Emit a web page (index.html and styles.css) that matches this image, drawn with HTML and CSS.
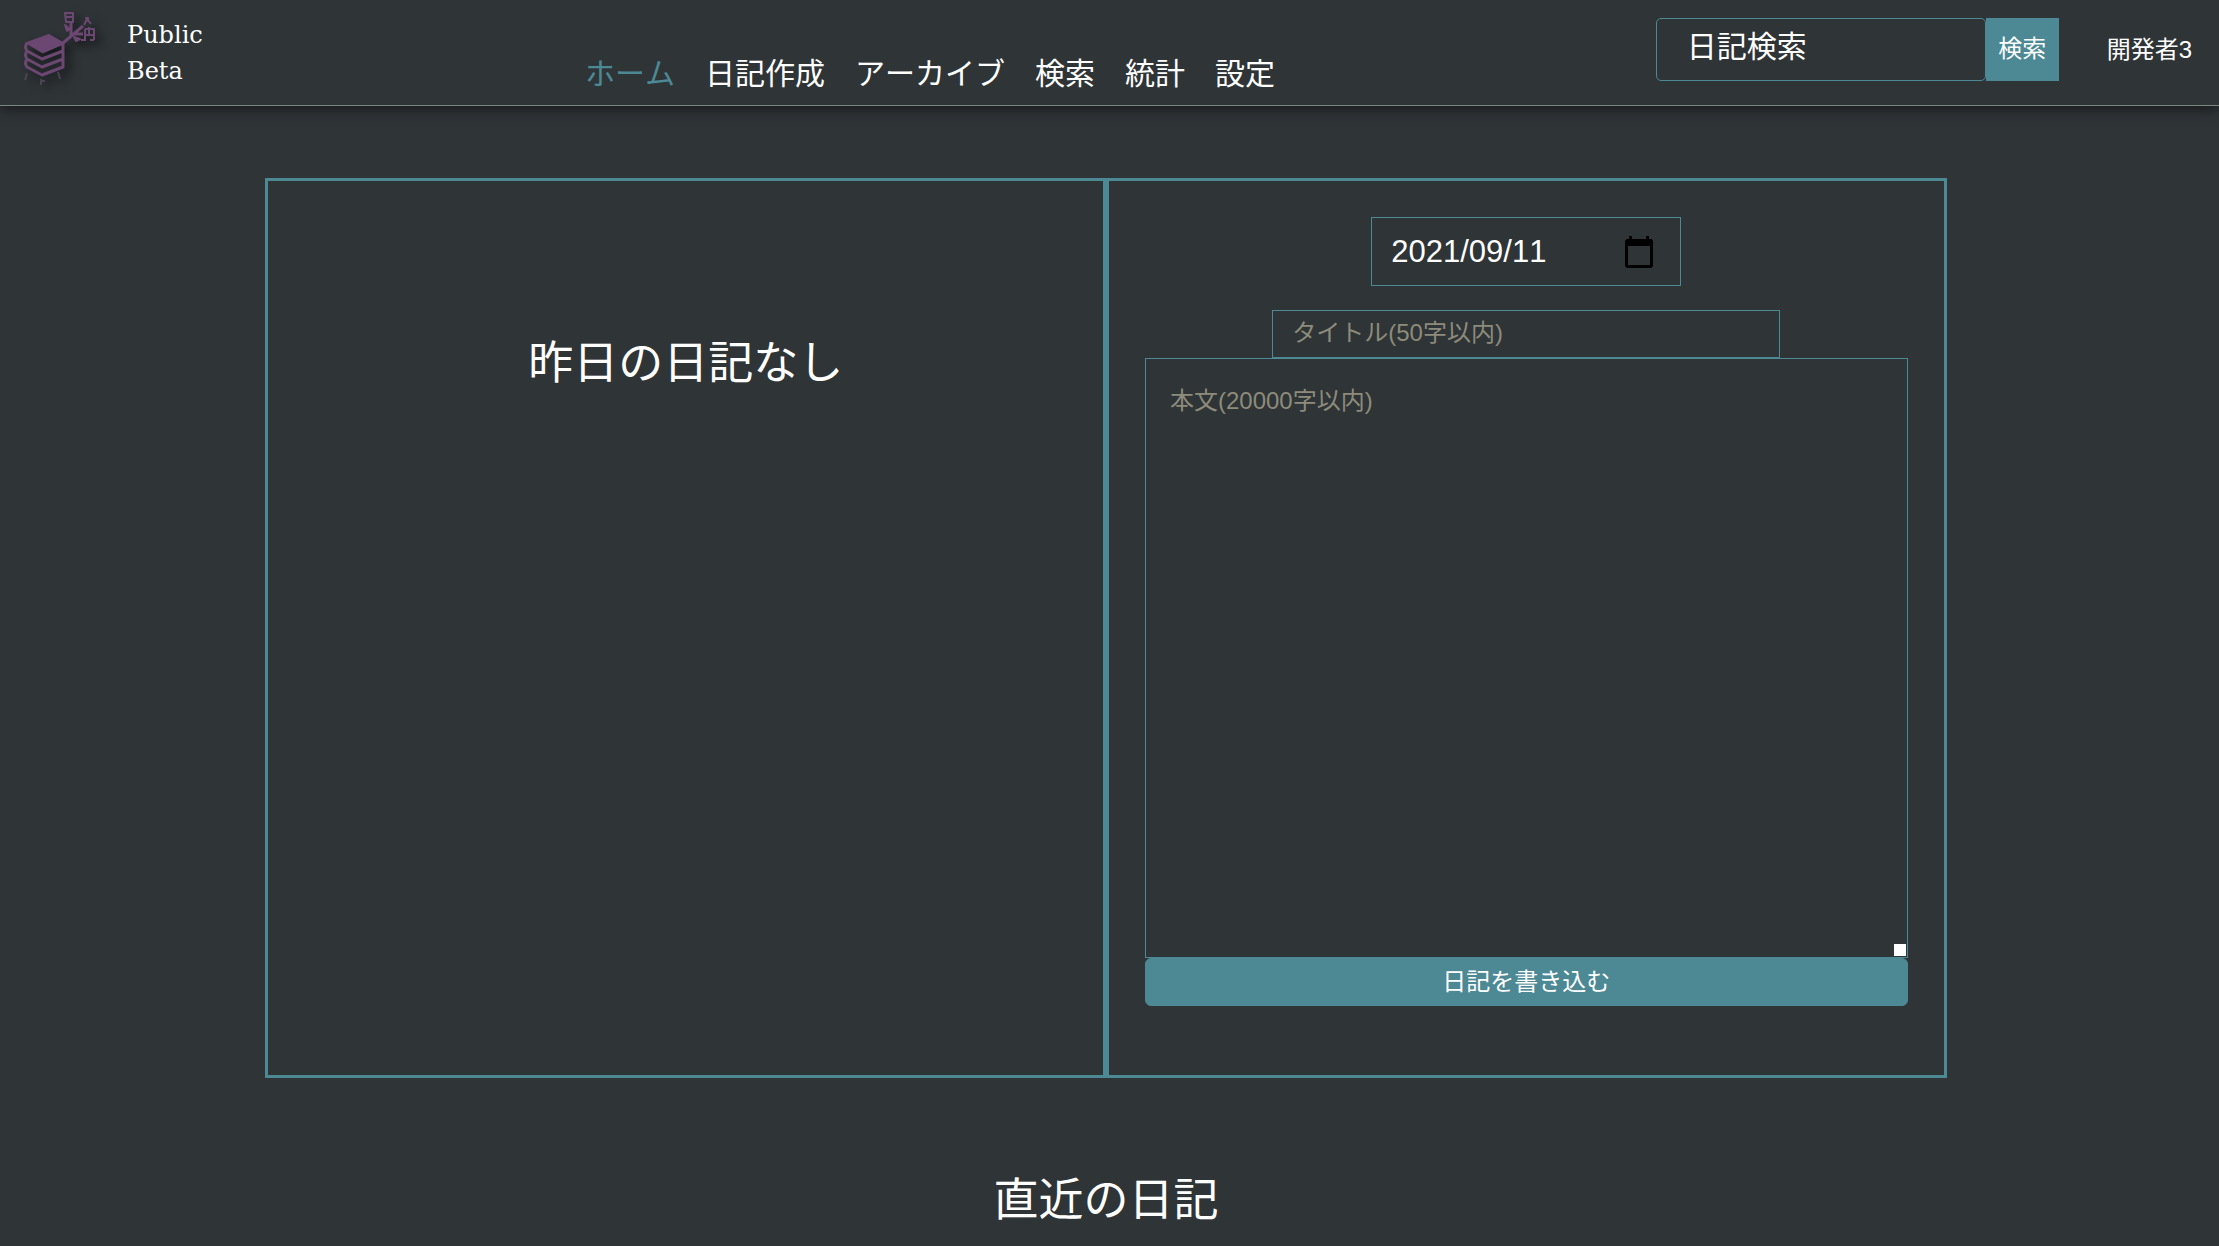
FILE: index.html
```html
<!DOCTYPE html>
<html lang="ja">
<head>
<meta charset="utf-8">
<meta name="viewport" content="width=device-width, initial-scale=1">
<title>ホーム</title>
<link rel="stylesheet" href="styles.css">
</head>
<body>
<header class="header">
  <a class="brand" href="#">
    <svg class="logo" viewBox="0 0 90 90" aria-hidden="true">
      <g fill="#6b4772" stroke="#6b4772" stroke-width="2" stroke-linejoin="round">
        <path d="M12 38 34 30 48 38 27 47Z"/>
        <path fill="none" stroke-width="3" d="M12 38Q9 42 12 46L27 54 48 46V38M27 47 48 38M12 46Q9 50 12 54L27 62 48 54V46M12 54Q9 58 12 62L27 70 48 62V54"/>
        <path fill="none" stroke-width="3" d="M48 38 68 21M56 31V18M58 29H68"/>
        <path fill="none" d="M50 8H58V17H51ZM51 12H58M69 20 72 14 76 19M70 24H79V35M70 24V35M74 22V30M70 30H79M66 35H71M75 35H79"/>
        <path d="M50 20 55 24 52 26ZM59 32 65 34 61 36ZM71 13 73 13 73 16Z"/>
      </g>
      <path fill="none" stroke="#4a4350" stroke-width="2" d="M12 68 10 75M26 74V80M26 76H30M43 67 45 74"/>
    </svg>
    <span class="brand-name">Public<br>Beta</span>
  </a>
  <nav class="nav">
    <a class="nav-link current" href="#">ホーム</a>
    <a class="nav-link" href="#">日記作成</a>
    <a class="nav-link" href="#">アーカイブ</a>
    <a class="nav-link" href="#">検索</a>
    <a class="nav-link" href="#">統計</a>
    <a class="nav-link" href="#">設定</a>
  </nav>
  <form class="search">
    <input class="search-input" type="text" placeholder="日記検索" aria-label="日記検索">
    <button class="search-button" type="button">検索</button>
  </form>
  <a class="user" href="#">開発者3</a>
</header>
<main class="main">
  <div class="panels">
    <section class="panel">
      <h2 class="heading">昨日の日記なし</h2>
    </section>
    <form class="panel editor">
      <div class="date-field">
        <input class="date-input" type="text" value="2021/09/11" aria-label="日付">
        <button class="date-button" type="button" aria-label="カレンダー">
          <svg viewBox="0 0 30 34" aria-hidden="true"><path fill-rule="evenodd" d="M5 1H8V4H22V1H25V4H27Q29 4 29 7V30Q29 33 26 33H4Q1 33 1 30V7Q1 4 4 4H5ZM4 11V30H26V11Z"/></svg>
        </button>
      </div>
      <input class="title-input" type="text" placeholder="タイトル(50字以内)" aria-label="タイトル">
      <textarea class="body-input" placeholder="本文(20000字以内)" aria-label="本文"></textarea>
      <button class="submit" type="button">日記を書き込む</button>
    </form>
  </div>
  <h2 class="heading">直近の日記</h2>
</main>
</body>
</html>
```
FILE: styles.css
```css
* { box-sizing: border-box; }

body {
  margin: 0;
  background: #2f3437;
  color: #fff;
  font-family: "Liberation Sans", "Noto Sans CJK JP", sans-serif;
  font-size: 24px;
  font-kerning: none;
}

a { color: inherit; text-decoration: none; }

input, textarea, button {
  margin: 0;
  font: inherit;
  font-kerning: none;
  color: inherit;
  background: none;
  border: 1px solid #4c8995;
  border-radius: 0;
}

.header {
  display: flex;
  align-items: flex-start;
  height: 106px;
  padding-right: 27px;
  background: #2f3437;
  border-bottom: 1px solid #7d8582;
  box-shadow: 0 3px 12px #15191a;
}

.brand {
  display: flex;
  flex: 0 0 585px;
  gap: 22px;
  padding: 5px 0 0 15px;
}

.logo {
  width: 90px;
  height: 90px;
  filter: drop-shadow(6px 6px 5px #15181a);
}

.brand-name {
  padding-top: 12px;
  font-family: "DejaVu Serif", serif;
  line-height: 36px;
}

.nav {
  display: flex;
  gap: 30px;
  padding-top: 52px;
  font-size: 30px;
  line-height: 44px;
}

.current { color: #4c8995; }

.search {
  display: flex;
  height: 63px;
  margin: 18px 48px 0 auto;
}

.search-input {
  width: 330px;
  padding: 0 30px 6px;
  font-size: 30px;
  border-radius: 5px;
}

.search-input::placeholder { color: #fff; opacity: 1; }

.search-button {
  width: 73px;
  padding: 0 0 6px;
  background: #4c8995;
}

.user {
  padding-top: 32px;
  line-height: 36px;
}

.main {
  padding: 72px 7px 0 0;
}

.panels {
  display: grid;
  grid-template-columns: 1fr 1fr;
  width: 76%;
  margin: 0 auto 88px;
}

.panel {
  min-height: 900px;
  border: 3px solid #4c8995;
}

.heading {
  margin: 0;
  font-size: 45px;
  font-weight: 400;
  line-height: 70px;
  text-align: center;
}

.panel .heading { padding-top: 148px; }

.editor {
  display: flex;
  flex-direction: column;
  align-items: center;
  padding: 36px;
}

.date-field {
  display: flex;
  align-items: center;
  width: 310px;
  height: 69px;
  margin-bottom: 24px;
  padding: 0 26px 0 19px;
  border: 1px solid #4c8995;
}

.date-input {
  flex: 1;
  min-width: 0;
  padding: 0;
  border: 0;
  font-size: 31px;
}

.date-button {
  width: 30px;
  height: 34px;
  padding: 0;
  border: 0;
}

.date-button svg { display: block; fill: #000; }

.title-input {
  width: 508px;
  height: 48px;
  padding: 0 19px 2px;
}

.body-input {
  width: 100%;
  height: 600px;
  padding: 24px;
  line-height: 36px;
  resize: vertical;
}

.title-input::placeholder, .body-input::placeholder { color: #8d8b7b; opacity: 1; }

.body-input::-webkit-resizer {
  background: #fff;
  border: solid #2f3437;
  border-width: 2px 1px 1px 2px;
}

.submit {
  width: 100%;
  height: 48px;
  padding: 0 0 6px;
  background: #4c8995;
  border-radius: 6px;
}
```
